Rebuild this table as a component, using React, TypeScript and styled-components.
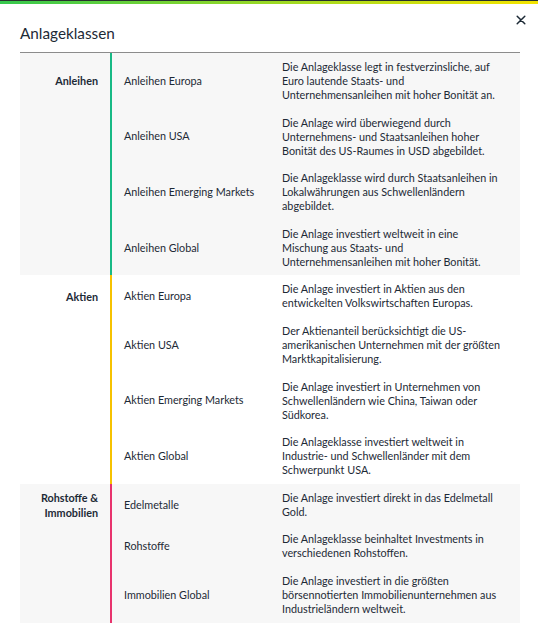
import React from "react";
import styled, { createGlobalStyle } from "styled-components";

const GlobalStyle = createGlobalStyle`
  html, body {
    margin: 0;
    padding: 0;
    background: #ffffff;
  }
  body {
    font-family: Lato, "Noto Sans", "Liberation Sans", sans-serif;
    color: #1d2a36;
  }
`;

type Item = { name: string; lines: string[] };
type Group = { label: string[]; color: string; shaded: boolean; items: Item[] };

const groups: Group[] = [
  {
    label: ["Anleihen"],
    color: "#18b985",
    shaded: true,
    items: [
      {
        name: "Anleihen Europa",
        lines: [
          "Die Anlageklasse legt in festverzinsliche, auf",
          "Euro lautende Staats- und",
          "Unternehmensanleihen mit hoher Bonität an.",
        ],
      },
      {
        name: "Anleihen USA",
        lines: [
          "Die Anlage wird überwiegend durch",
          "Unternehmens- und Staatsanleihen hoher",
          "Bonität des US-Raumes in USD abgebildet.",
        ],
      },
      {
        name: "Anleihen Emerging Markets",
        lines: [
          "Die Anlageklasse wird durch Staatsanleihen in",
          "Lokalwährungen aus Schwellenländern",
          "abgebildet.",
        ],
      },
      {
        name: "Anleihen Global",
        lines: [
          "Die Anlage investiert weltweit in eine",
          "Mischung aus Staats- und",
          "Unternehmensanleihen mit hoher Bonität.",
        ],
      },
    ],
  },
  {
    label: ["Aktien"],
    color: "#f6c200",
    shaded: false,
    items: [
      {
        name: "Aktien Europa",
        lines: [
          "Die Anlage investiert in Aktien aus den",
          "entwickelten Volkswirtschaften Europas.",
        ],
      },
      {
        name: "Aktien USA",
        lines: [
          "Der Aktienanteil berücksichtigt die US-",
          "amerikanischen Unternehmen mit der größten",
          "Marktkapitalisierung.",
        ],
      },
      {
        name: "Aktien Emerging Markets",
        lines: [
          "Die Anlage investiert in Unternehmen von",
          "Schwellenländern wie China, Taiwan oder",
          "Südkorea.",
        ],
      },
      {
        name: "Aktien Global",
        lines: [
          "Die Anlageklasse investiert weltweit in",
          "Industrie- und Schwellenländer mit dem",
          "Schwerpunkt USA.",
        ],
      },
    ],
  },
  {
    label: ["Rohstoffe &", "Immobilien"],
    color: "#e8336d",
    shaded: true,
    items: [
      {
        name: "Edelmetalle",
        lines: ["Die Anlage investiert direkt in das Edelmetall", "Gold."],
      },
      {
        name: "Rohstoffe",
        lines: ["Die Anlageklasse beinhaltet Investments in", "verschiedenen Rohstoffen."],
      },
      {
        name: "Immobilien Global",
        lines: [
          "Die Anlage investiert in die größten",
          "börsennotierten Immobilienunternehmen aus",
          "Industrieländern weltweit.",
        ],
      },
    ],
  },
];

const TopBar = styled.div`
  height: 3px;
  border-top: 1px solid #27332d;
  background: linear-gradient(90deg, #36c84e 0%, #9ad925 50%, #f4e400 100%);
`;

const Modal = styled.div`
  padding: 0 12px 0 20px;
`;

const Header = styled.header`
  display: flex;
  justify-content: space-between;
  align-items: flex-start;
  height: 48px;
`;

const Title = styled.h2`
  margin: 19px 0 0;
  font-size: 15.3px;
  line-height: 20px;
  font-weight: 400;
  color: #1d2a36;
`;

const CloseButton = styled.button`
  margin-top: 11px;
  width: 10px;
  height: 10px;
  padding: 0;
  border: 0;
  background: transparent;
  display: flex;
  align-items: center;
  justify-content: center;
  cursor: pointer;
  color: #1d2a36;
`;

const Table = styled.div`
  margin-right: 6px;
  border-top: 1px solid #8c8c8c;
  font-size: 10.8px;
  line-height: 14px;
`;

const GroupBlock = styled.div<{ $shaded: boolean }>`
  background: ${(p) => (p.$shaded ? "#f7f7f7" : "#ffffff")};
`;

const Row = styled.div`
  display: grid;
  grid-template-columns: 92px 158px 1fr;
`;

const CategoryCell = styled.div<{ $color: string }>`
  border-right: 2px solid ${(p) => p.$color};
  padding-right: 12px;
  display: flex;
  flex-direction: column;
  justify-content: center;
  align-items: flex-end;
  text-align: right;
  font-weight: 700;
  line-height: 15px;
`;

const NameCell = styled.div`
  padding-left: 12px;
  display: flex;
  align-items: center;
  white-space: nowrap;
`;

const DescCell = styled.div`
  padding: 7px 12px 6.6px;
`;

const Line = styled.div`
  white-space: nowrap;
`;

export default function App() {
  return (
    <>
      <GlobalStyle />
      <TopBar />
      <Modal>
        <Header>
          <Title>Anlageklassen</Title>
          <CloseButton aria-label="Schließen">
            <svg width="10" height="10" viewBox="0 0 10 10">
              <path
                d="M1.2 1.2 L8.8 8.8 M8.8 1.2 L1.2 8.8"
                stroke="currentColor"
                strokeWidth="1.5"
                strokeLinecap="round"
              />
            </svg>
          </CloseButton>
        </Header>
        <Table>
          {groups.map((g) => (
            <GroupBlock key={g.label.join(" ")} $shaded={g.shaded}>
              {g.items.map((item, i) => (
                <Row key={item.name}>
                  <CategoryCell $color={g.color}>
                    {i === 0 && g.label.map((l) => <Line key={l}>{l}</Line>)}
                  </CategoryCell>
                  <NameCell>{item.name}</NameCell>
                  <DescCell>
                    {item.lines.map((l) => (
                      <Line key={l}>{l}</Line>
                    ))}
                  </DescCell>
                </Row>
              ))}
            </GroupBlock>
          ))}
        </Table>
      </Modal>
    </>
  );
}
